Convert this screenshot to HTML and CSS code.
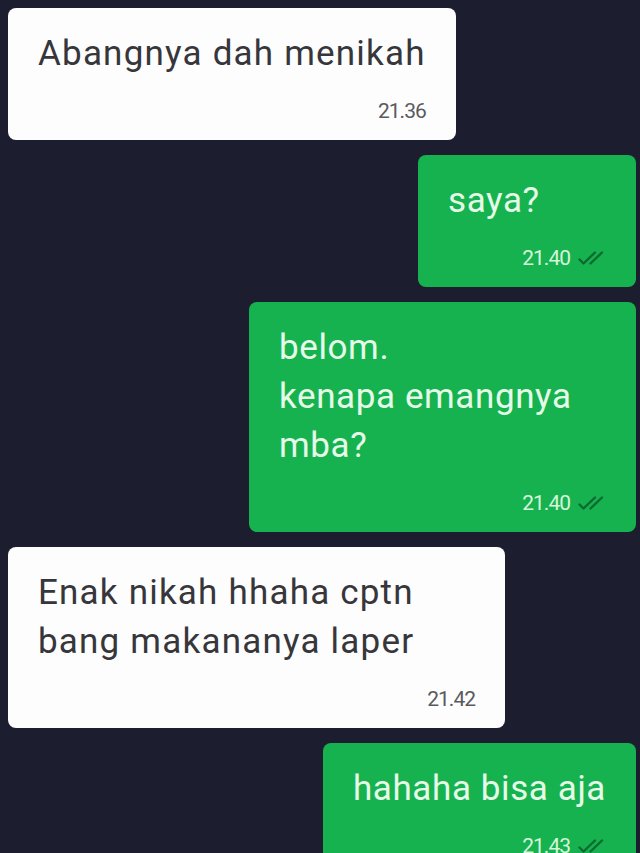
FILE: index.html
```html
<!DOCTYPE html>
<html lang="id">
<head>
<meta charset="utf-8">
<title>Chat</title>
<link rel="stylesheet" href="styles.css">
</head>
<body>
<main class="chat">
  <div class="bubble in">
    <p class="text">Abangnya dah menikah</p>
    <div class="meta"><span class="time">21.36</span></div>
  </div>
  <div class="bubble out">
    <p class="text">saya?</p>
    <div class="meta"><span class="time">21.40</span><svg class="ticks" viewBox="0 0 32 14"><path d="M2.5 8.5 L6.5 12.5 L18 1.5 M13.5 12.5 L25 1.5"/></svg></div>
  </div>
  <div class="bubble out">
    <p class="text">belom.<br>kenapa emangnya mba?</p>
    <div class="meta"><span class="time">21.40</span><svg class="ticks" viewBox="0 0 32 14"><path d="M2.5 8.5 L6.5 12.5 L18 1.5 M13.5 12.5 L25 1.5"/></svg></div>
  </div>
  <div class="bubble in">
    <p class="text">Enak nikah hhaha cptn bang makananya laper</p>
    <div class="meta"><span class="time">21.42</span></div>
  </div>
  <div class="bubble out">
    <p class="text">hahaha bisa aja</p>
    <div class="meta"><span class="time">21.43</span><svg class="ticks" viewBox="0 0 32 14"><path d="M2.5 8.5 L6.5 12.5 L18 1.5 M13.5 12.5 L25 1.5"/></svg></div>
  </div>
</main>
</body>
</html>
```
FILE: styles.css
```css
html, body {
  margin: 0;
  padding: 0;
  background: #1c1d2e;
  font-family: Roboto, "Liberation Sans", sans-serif;
}

body {
  height: 853px;
  overflow: hidden;
}

.chat {
  display: flex;
  flex-direction: column;
  gap: 15px;
  padding: 8px 4px 0 8px;
}

.bubble {
  box-sizing: border-box;
  width: max-content;
  padding: 21px 30px 16px 30px;
  border-radius: 8px;
}

.bubble.in {
  align-self: flex-start;
  max-width: 497px;
  background: #fdfdfd;
  color: #36363b;
}

.bubble.out {
  align-self: flex-end;
  min-width: 218px;
  max-width: 387px;
  background: #17b250;
  color: #e6fae8;
}

.text {
  margin: 0;
  font-size: 35px;
  line-height: 49px;
  letter-spacing: 1.2px;
}

.out .text {
  letter-spacing: 0.6px;
}

.meta {
  margin-top: 20px;
  display: flex;
  justify-content: flex-end;
  align-items: center;
  gap: 7px;
  height: 26px;
}

.time {
  font-size: 21px;
  line-height: 26px;
  letter-spacing: -1px;
}

.in .time {
  color: #5a5a5e;
}

.out .time {
  color: #d6f6da;
}

.ticks {
  width: 32px;
  height: 14px;
  margin-right: -3px;
  fill: none;
  stroke: #0c6a2f;
  stroke-width: 2.4;
  stroke-linecap: round;
  stroke-linejoin: round;
}
```
